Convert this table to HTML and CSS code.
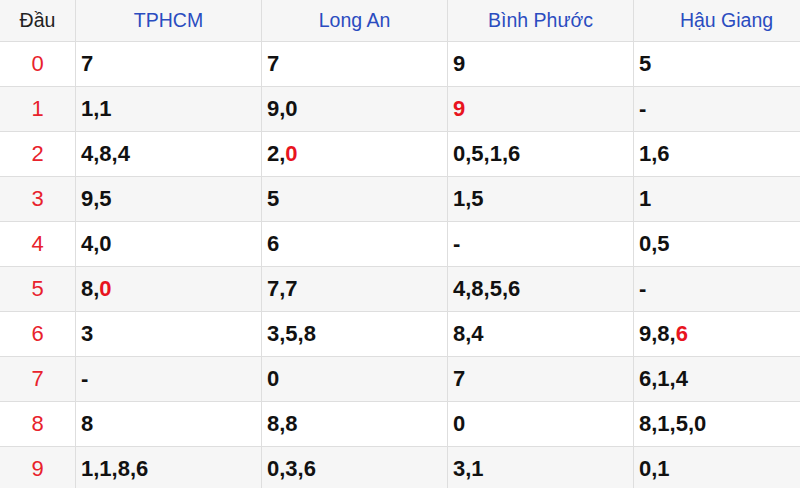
FILE: index.html
```html
<!DOCTYPE html>
<html lang="vi">
<head>
<meta charset="utf-8">
<title>Lô tô đầu</title>
<link rel="stylesheet" href="styles.css">
</head>
<body>
<table class="loto">
  <thead>
    <tr>
      <th class="head-col">Đầu</th>
      <th class="prov">TPHCM</th>
      <th class="prov">Long An</th>
      <th class="prov">Bình Phước</th>
      <th class="prov">Hậu Giang</th>
    </tr>
  </thead>
  <tbody>
    <tr><td class="num">0</td><td>7</td><td>7</td><td>9</td><td>5</td></tr>
    <tr><td class="num">1</td><td>1,1</td><td>9,0</td><td><span class="hl">9</span></td><td>-</td></tr>
    <tr><td class="num">2</td><td>4,8,4</td><td>2,<span class="hl">0</span></td><td>0,5,1,6</td><td>1,6</td></tr>
    <tr><td class="num">3</td><td>9,5</td><td>5</td><td>1,5</td><td>1</td></tr>
    <tr><td class="num">4</td><td>4,0</td><td>6</td><td>-</td><td>0,5</td></tr>
    <tr><td class="num">5</td><td>8,<span class="hl">0</span></td><td>7,7</td><td>4,8,5,6</td><td>-</td></tr>
    <tr><td class="num">6</td><td>3</td><td>3,5,8</td><td>8,4</td><td>9,8,<span class="hl">6</span></td></tr>
    <tr><td class="num">7</td><td>-</td><td>0</td><td>7</td><td>6,1,4</td></tr>
    <tr><td class="num">8</td><td>8</td><td>8,8</td><td>0</td><td>8,1,5,0</td></tr>
    <tr><td class="num">9</td><td>1,1,8,6</td><td>0,3,6</td><td>3,1</td><td>0,1</td></tr>
  </tbody>
</table>
</body>
</html>
```

FILE: styles.css
```css
html, body {
  margin: 0;
  padding: 0;
  background: #fff;
  overflow: hidden;
}
body {
  font-family: "Liberation Sans", Arial, sans-serif;
  width: 800px;
  height: 488px;
}
.loto {
  border-collapse: collapse;
  table-layout: fixed;
  width: 820px;
}
.loto th, .loto td {
  border: 1px solid #dedede;
  padding: 0 0 0 5px;
  text-align: left;
  line-height: 1;
}
.loto tr > :first-child { border-left: none; }
.loto thead th {
  border-top: none;
  height: 41px;
  background: #f6f6f6;
  font-weight: normal;
  font-size: 19.5px;
  text-align: center;
  padding: 0;
  color: #2a4cc0;
}
.loto thead .head-col {
  width: 75px;
  color: #222;
}
.loto tbody td {
  height: 44px;
  font-size: 22px;
  font-weight: bold;
  color: #111;
}
.loto tbody tr:nth-child(even) td { background: #f6f6f6; }
.loto tbody td.num {
  text-align: center;
  padding: 0;
  font-weight: normal;
  color: #e8222c;
}
.hl { color: #e8141e; }
```
